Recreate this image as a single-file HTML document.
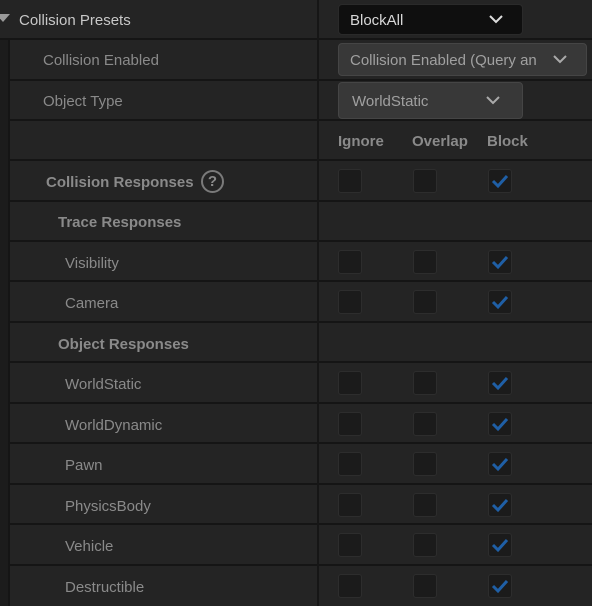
<!DOCTYPE html><html><head><style>
body{margin:0;width:592px;height:606px;background:#151515;overflow:hidden;font-family:"Liberation Sans",sans-serif;position:relative}
.row{position:absolute;left:10px;right:0;background:#242424}
.row.full{left:0}
.lab{position:absolute;font-size:15px;color:#8a8a8a;white-space:nowrap}
.b{font-weight:bold;color:#8a8a8a}
.div{position:absolute;left:317px;top:0;bottom:0;width:2px;background:#161616}
.cb{position:absolute;width:22px;height:22px;background:#1b1b1b;border:1px solid #2d2d2d;border-radius:3px}
.dd{position:absolute;border-radius:4px;font-size:15px;box-sizing:border-box;padding-left:11px;white-space:nowrap;overflow:hidden}
.chev{position:absolute;top:50%;margin-top:-5px}
</style></head><body>
<div class="row full" style="top:0;height:38px"></div>
<div style="position:absolute;left:0;top:40px;width:8px;bottom:0;background:#1c1c1c"></div>
<div id="rows"></div>
<script>
var tops=[0,40,81,121,161,202,242,282,323,363,404,444,485,525,566];
var h=document.getElementById('rows'),s='';
for(var i=1;i<tops.length;i++){var t=tops[i],b=(i+1<tops.length?tops[i+1]-2:606);s+='<div class="row" style="top:'+t+'px;height:'+(b-t)+'px"></div>';}
h.innerHTML=s;
</script>
<div class="div" style="top:0"></div>
<div class="lab" style="left:0;top:14px;width:0;height:0;border-left:7px solid transparent;border-right:7px solid transparent;border-top:8px solid #9a9a9a;margin-left:-4px"></div>
<div class="lab" style="left:19px;top:12px;color:#c8c8c8">Collision Presets</div>
<div class="lab" style="left:43px;top:52px">Collision Enabled</div>
<div class="lab" style="left:43px;top:93px">Object Type</div>
<div class="lab b" style="left:46px;top:174px">Collision Responses</div>
<div style="position:absolute;left:201px;top:170px;width:19px;height:19px;border:2px solid #7a7a7a;border-radius:50%;color:#8a8a8a;font-size:15px;font-weight:bold;text-align:center;line-height:19px">?</div>
<div class="lab b" style="left:58px;top:214px">Trace Responses</div>
<div class="lab" style="left:65px;top:255px">Visibility</div>
<div class="lab" style="left:65px;top:295px">Camera</div>
<div class="lab b" style="left:58px;top:336px">Object Responses</div>
<div class="lab" style="left:65px;top:376px">WorldStatic</div>
<div class="lab" style="left:65px;top:417px">WorldDynamic</div>
<div class="lab" style="left:65px;top:457px">Pawn</div>
<div class="lab" style="left:65px;top:498px">PhysicsBody</div>
<div class="lab" style="left:65px;top:538px">Vehicle</div>
<div class="lab" style="left:65px;top:579px">Destructible</div>
<div class="lab b" style="left:338px;top:133px">Ignore</div>
<div class="lab b" style="left:412px;top:133px">Overlap</div>
<div class="lab b" style="left:487px;top:133px">Block</div>
<div class="dd" style="left:338px;top:4px;width:185px;height:31px;background:#0f0f0f;border:1px solid #2a2a2a;color:#d8d8d8;line-height:31px">BlockAll<svg class="chev" style="left:150px" width="14" height="9"><path d="M1 1L7 7L13 1" stroke="#ddd" stroke-width="2" fill="none"/></svg></div>
<div class="dd" style="left:338px;top:43px;width:249px;height:33px;background:#383838;border:1px solid #454545;color:#a0a0a0;line-height:33px">Collision Enabled (Query an<svg class="chev" style="left:214px" width="14" height="9"><path d="M1 1L7 7L13 1" stroke="#aaa" stroke-width="2" fill="none"/></svg></div>
<div class="dd" style="left:338px;top:82px;width:185px;height:37px;background:#383838;border:1px solid #454545;color:#a0a0a0;line-height:37px;padding-left:13px">WorldStatic<svg class="chev" style="left:147px" width="14" height="9"><path d="M1 1L7 7L13 1" stroke="#aaa" stroke-width="2" fill="none"/></svg></div>
<div id="cbs"></div>
<script>
var ys=[181,262,302,383,424,464,505,545,586],c='';
ys.forEach(function(y){[338,413,488].forEach(function(x,j){c+='<div class="cb" style="left:'+x+'px;top:'+(y-12)+'px">'+(j==2?'<svg width="22" height="22"><path d="M4 11L9 16L18 6" stroke="#1f5fa6" stroke-width="3" fill="none"/></svg>':'')+'</div>';});});
document.getElementById('cbs').innerHTML=c;
</script>
</body></html>
